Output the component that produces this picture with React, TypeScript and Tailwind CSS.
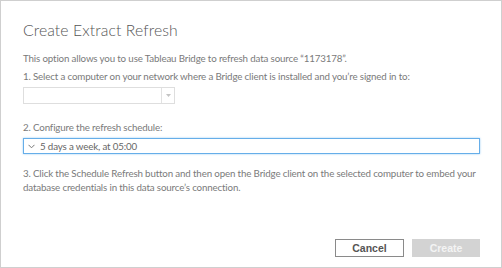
import React from "react";

export default function App() {
  return (
    <div className="w-[502px] h-[268px] border border-[#cfcfcf] bg-white flex flex-col pl-[22px] pr-[21px] pt-[17px] pb-[10px] font-['Lato',sans-serif] text-[#7a7a7a]">
      <div className="h-[24px] leading-[24px] text-[15.75px] font-light text-[#555] tracking-[0.1px]">Create Extract Refresh</div>
      <div className="mt-[9px] h-[14px] leading-[14px] text-[9.75px] tracking-[-0.15px]">
        This option allows you to use Tableau Bridge to refresh data source “1173178”.
      </div>
      <div className="mt-[4px] h-[14px] leading-[14px] text-[9.75px] tracking-[-0.15px]">
        1. Select a computer on your network where a Bridge client is installed and you’re signed in to:
      </div>
      <div className="mt-[4px] w-[152px] h-[17px] border border-[#dedede] flex">
        <div className="flex-1" />
        <div className="w-[13px] border-l border-[#e2e2e2] flex items-center justify-center">
          <svg width="5" height="3" viewBox="0 0 5 3">
            <path d="M0 0 L5 0 L2.5 3 Z" fill="#c4c4c4" />
          </svg>
        </div>
      </div>
      <div className="mt-[16px] h-[14px] leading-[14px] text-[9.75px] tracking-[-0.15px]">2. Configure the refresh schedule:</div>
      <div className="mt-[4px] h-[16px] border border-[#66aee9] shadow-[0_0_2px_#9dcdf3] flex items-center pl-[4px] text-[9.75px] tracking-[-0.15px] text-[#666]">
        <svg width="7" height="5" viewBox="0 0 7 5" className="mr-[5px]">
          <path d="M0.5 0.8 L3.5 3.8 L6.5 0.8" fill="none" stroke="#777" strokeWidth="1" />
        </svg>
        <span className="leading-[14px]">5 days a week, at 05:00</span>
      </div>
      <div className="mt-[12px] leading-[14px] text-[9.75px] tracking-[-0.15px]">
        3. Click the Schedule Refresh button and then open the Bridge client on the selected computer to embed your database credentials in this data source’s connection.
      </div>
      <div className="mt-auto flex justify-end gap-[8px] font-['Liberation_Sans',sans-serif]">
        <button className="w-[69px] h-[18px] border border-[#8a8a8a] bg-white text-[10.5px] font-bold text-[#555] leading-[16px]">Cancel</button>
        <button className="w-[68px] h-[18px] bg-[#d3d3d3] text-[10.5px] font-bold text-[#f4f4f4] leading-[18px]">Create</button>
      </div>
    </div>
  );
}
